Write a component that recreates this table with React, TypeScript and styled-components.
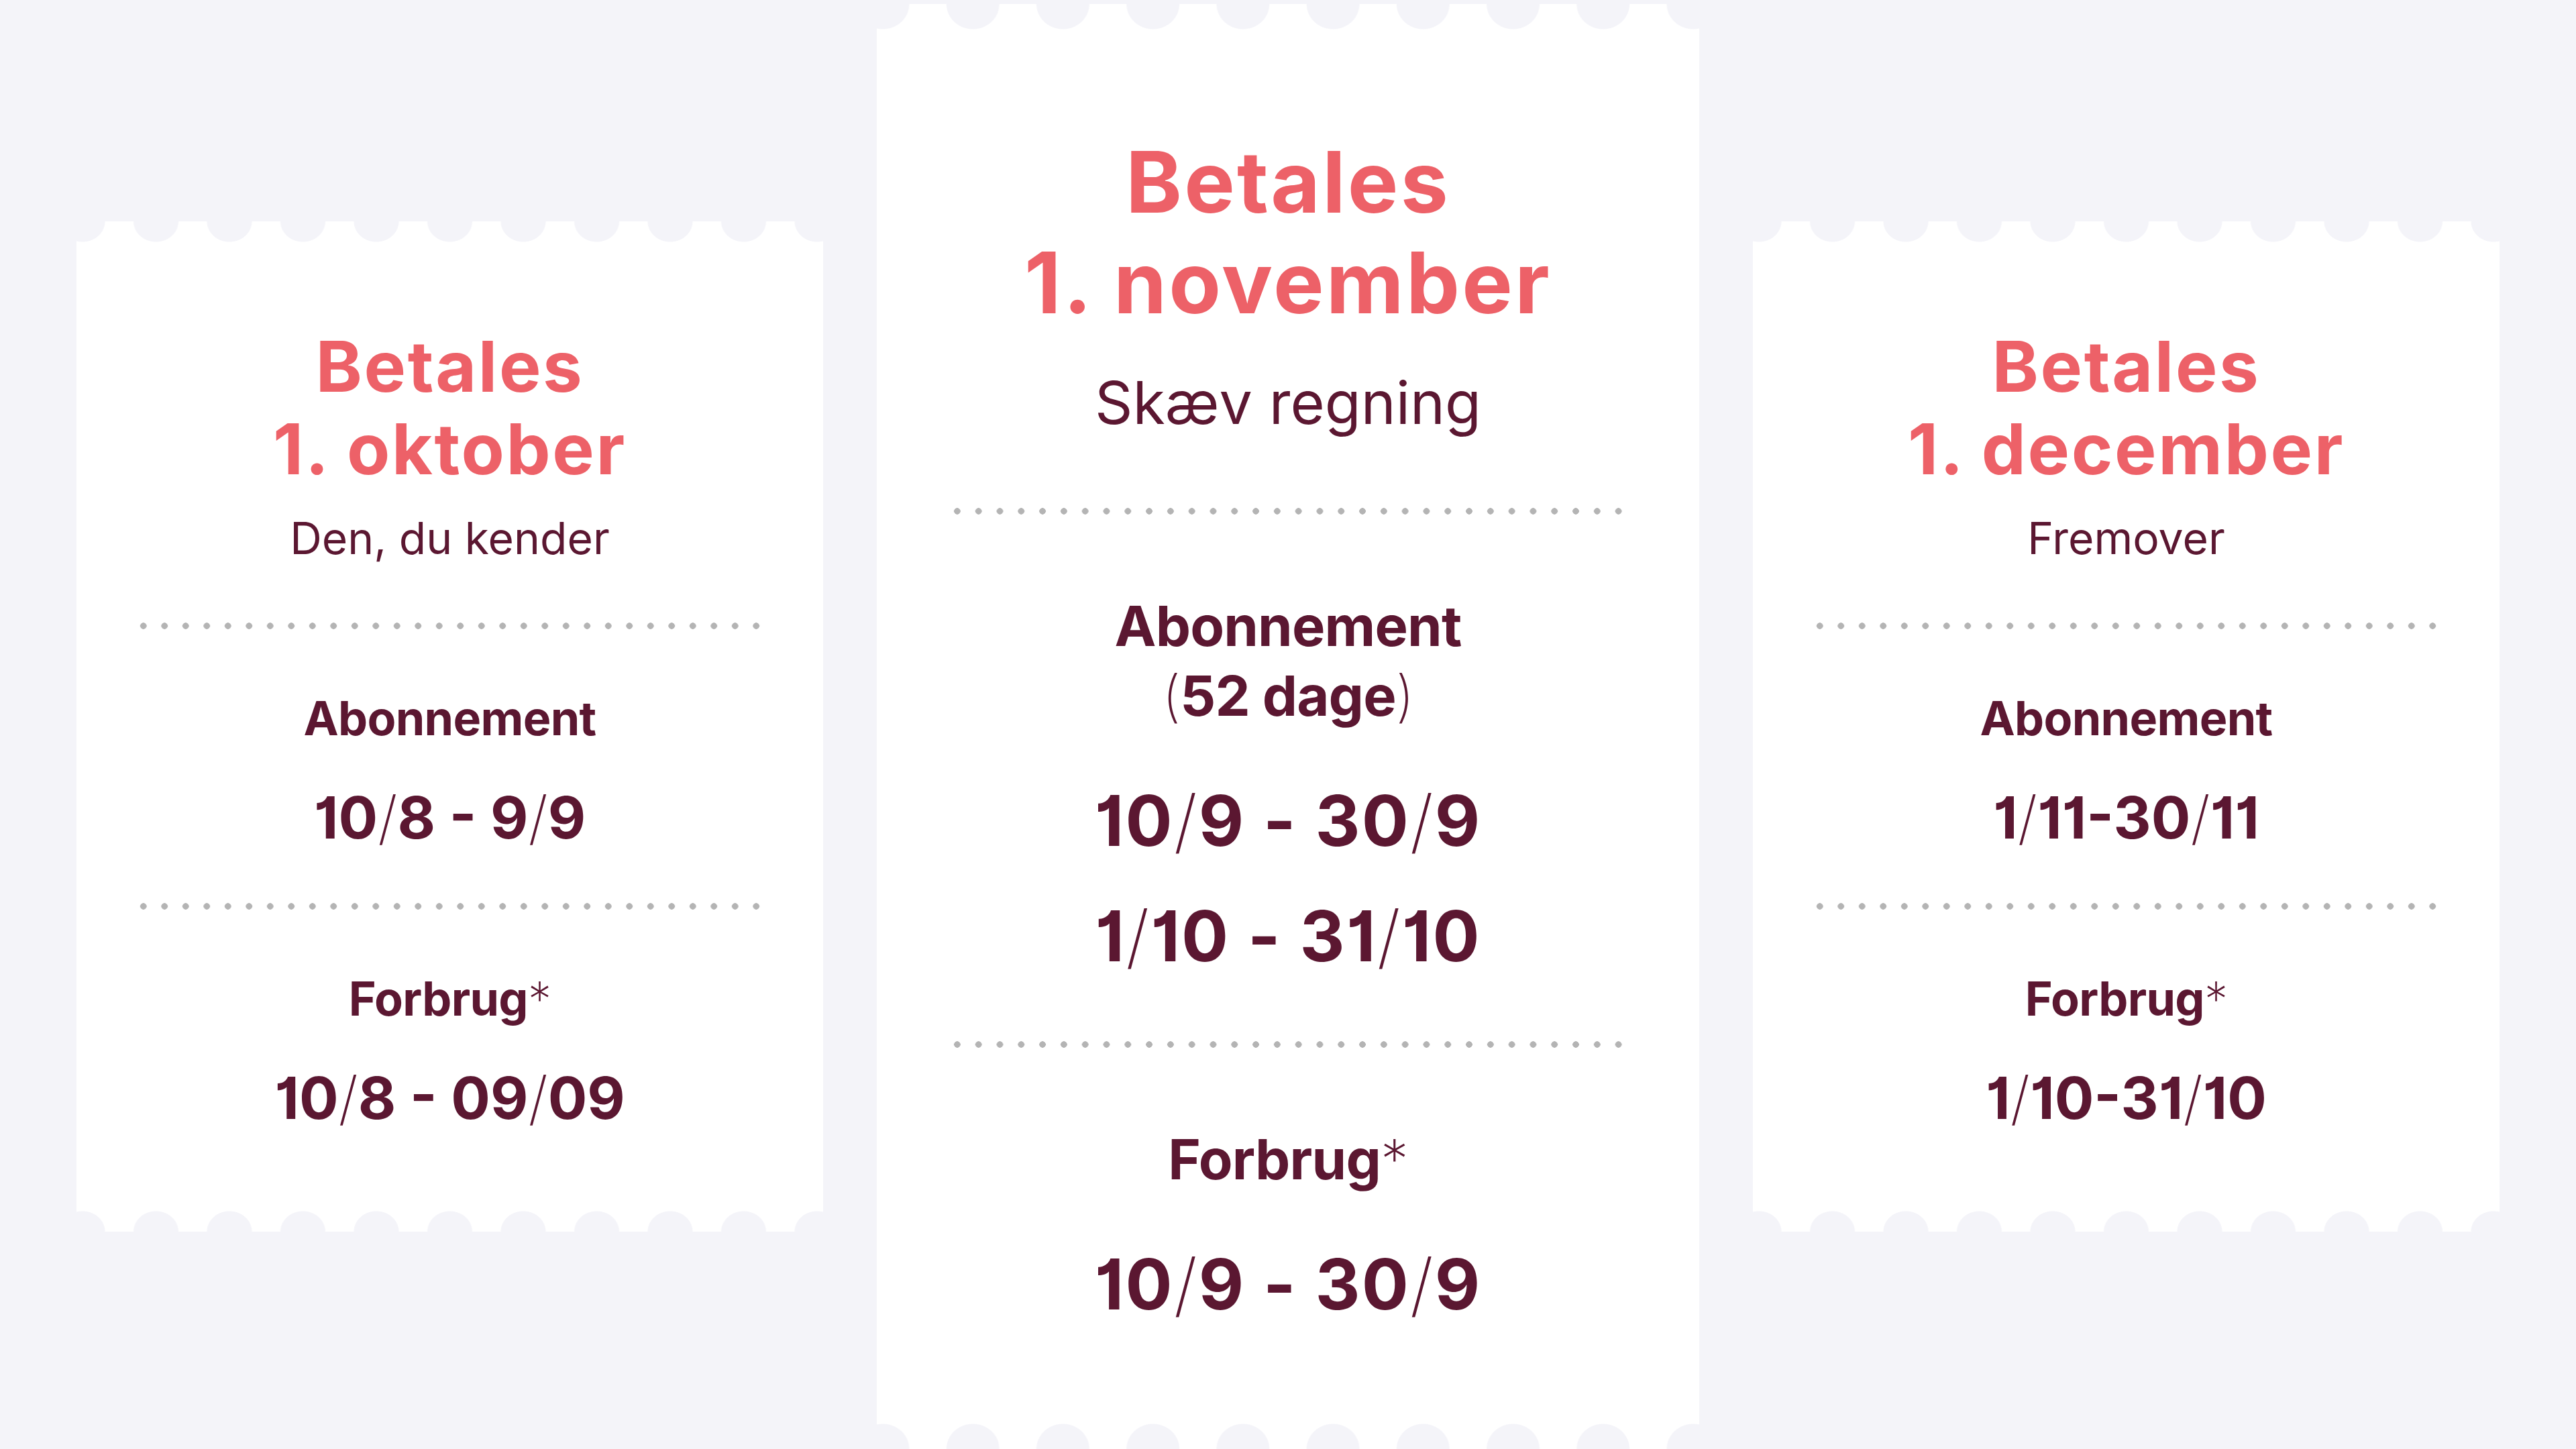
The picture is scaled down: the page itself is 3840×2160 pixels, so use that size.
import styled, { createGlobalStyle } from 'styled-components'

const BG = '#f4f4f9'
const CORAL = '#ed6168'
const WINE = '#5b1731'
const DOT = '#b4b4b4'

type Size = 'small' | 'big'

// measurements for the two ticket sizes
const sizes = {
  small: {
    width: 1113, height: 1506, top: 330, pad: 154, notchX: 34, notchY: 31,
    titleSize: 105, titleLH: 123, subSize: 66, subLH: 80, subMT: 32,
    divMT: 86, dots: 30, dotPitch: 31.5, labelSize: 70, labelLH: 80, labelMT: 93,
    dateSize: 87, dateLH: 100, dateMT: 58, div2MT: 77, dateTrack: 0,
  },
  big: {
    width: 1226, height: 2154, top: 6, pad: 190, notchX: 40, notchY: 38,
    titleSize: 127, titleLH: 150, subSize: 88, subLH: 100, subMT: 54,
    divMT: 107, dots: 32, dotPitch: 31.8, labelSize: 83, labelLH: 104, labelMT: 114,
    dateSize: 104, dateLH: 172, dateMT: 48, div2MT: 71, dateTrack: 0.02,
  },
}

const pitch = (s: Size) => (sizes[s].width - 18) / (s === 'big' ? 9 : 10)

const GlobalStyle = createGlobalStyle`
  html, body {
    margin: 0;
    padding: 0;
    background: ${BG};
  }
  body {
    font-family: Inter, 'Noto Sans', sans-serif;
    width: 3840px;
    height: 2160px;
    overflow: hidden;
  }
`

const Page = styled.main`
  display: flex;
  align-items: flex-start;
  gap: 80px;
  padding: 0 114px;
  height: 2160px;
  box-sizing: border-box;
`

const Ticket = styled.section<{ $size: Size }>`
  position: relative;
  flex: none;
  box-sizing: border-box;
  width: ${p => sizes[p.$size].width}px;
  height: ${p => sizes[p.$size].height}px;
  margin-top: ${p => sizes[p.$size].top}px;
  padding-top: ${p => sizes[p.$size].pad}px;
  background: #fff;
  display: flex;
  flex-direction: column;
  align-items: center;
  text-align: center;

  &::before,
  &::after {
    content: '';
    position: absolute;
    left: 0;
    right: 0;
    height: ${p => sizes[p.$size].notchY}px;
    background-repeat: repeat-x;
    background-size: ${p => pitch(p.$size)}px ${p => sizes[p.$size].notchY}px;
    background-position-x: ${p => 9 - pitch(p.$size) / 2}px;
  }

  &::before {
    top: 0;
    background-image: radial-gradient(${p => sizes[p.$size].notchX}px ${p => sizes[p.$size].notchY}px at 50% 0, ${BG} 97%, transparent 100%);
  }

  &::after {
    bottom: 0;
    background-image: radial-gradient(${p => sizes[p.$size].notchX}px ${p => sizes[p.$size].notchY}px at 50% 100%, ${BG} 97%, transparent 100%);
  }
`

const Title = styled.h2<{ $size: Size }>`
  margin: 0;
  color: ${CORAL};
  font-weight: 700;
  font-size: ${p => sizes[p.$size].titleSize}px;
  line-height: ${p => sizes[p.$size].titleLH}px;
  letter-spacing: 0.025em;
`

const Sub = styled.p<{ $size: Size }>`
  margin: ${p => sizes[p.$size].subMT}px 0 0;
  color: ${WINE};
  font-weight: 400;
  font-size: ${p => sizes[p.$size].subSize}px;
  line-height: ${p => sizes[p.$size].subLH}px;
`

const Dots = styled.div<{ $size: Size; $mt: number }>`
  flex: none;
  margin-top: ${p => p.$mt}px;
  width: ${p => sizes[p.$size].dots * sizes[p.$size].dotPitch}px;
  height: 10px;
  background-image: radial-gradient(circle 5px at 50% 50%, ${DOT} 90%, transparent 100%);
  background-size: ${p => sizes[p.$size].dotPitch}px 10px;
  background-repeat: repeat-x;
`

const Label = styled.h3<{ $size: Size }>`
  margin: ${p => sizes[p.$size].labelMT}px 0 0;
  color: ${WINE};
  font-weight: 700;
  font-size: ${p => sizes[p.$size].labelSize}px;
  line-height: ${p => sizes[p.$size].labelLH}px;
  letter-spacing: -0.01em;
`

const Dates = styled.div<{ $size: Size }>`
  margin-top: ${p => sizes[p.$size].dateMT}px;
  color: ${WINE};
  font-weight: 700;
  font-size: ${p => sizes[p.$size].dateSize}px;
  line-height: ${p => sizes[p.$size].dateLH}px;
  letter-spacing: ${p => sizes[p.$size].dateTrack}em;
  font-feature-settings: 'cv01';
  white-space: pre;
`

const Thin = styled.span`
  font-weight: 200;
`

const Typeset = ({ text }: { text: string }) => (
  <>
    {text.split(/([/()*])/).map((part, i) =>
      /^[/()*]$/.test(part) ? <Thin key={i}>{part}</Thin> : part
    )}
  </>
)

type TicketData = {
  size: Size
  title: string[]
  sub: string
  abo: string[]
  aboDates: string[]
  use: string[]
}

const tickets: TicketData[] = [
  {
    size: 'small',
    title: ['Betales', '1. oktober'],
    sub: 'Den, du kender',
    abo: ['Abonnement'],
    aboDates: ['10/8 - 9/9'],
    use: ['10/8 - 09/09'],
  },
  {
    size: 'big',
    title: ['Betales', '1. november'],
    sub: 'Skæv regning',
    abo: ['Abonnement', '(52 dage)'],
    aboDates: ['10/9 - 30/9', '1/10 - 31/10'],
    use: ['10/9 - 30/9'],
  },
  {
    size: 'small',
    title: ['Betales', '1. december'],
    sub: 'Fremover',
    abo: ['Abonnement'],
    aboDates: ['1/11-30/11'],
    use: ['1/10-31/10'],
  },
]

const Lines = ({ lines }: { lines: string[] }) => (
  <>
    {lines.map((l, i) => (
      <div key={i}><Typeset text={l} /></div>
    ))}
  </>
)

export default function App(): JSX.Element {
  return (
    <>
      <GlobalStyle />
      <Page>
        {tickets.map((t, index) => {
          const s = sizes[t.size]
          return (
            <Ticket key={index} $size={t.size}>
              <Title $size={t.size}><Lines lines={t.title} /></Title>
              <Sub $size={t.size}>{t.sub}</Sub>

              <Dots $size={t.size} $mt={s.divMT} />
              <Label $size={t.size}><Lines lines={t.abo} /></Label>
              <Dates $size={t.size}><Lines lines={t.aboDates} /></Dates>

              <Dots $size={t.size} $mt={s.div2MT} />
              <Label $size={t.size}><Typeset text="Forbrug*" /></Label>
              <Dates $size={t.size}><Lines lines={t.use} /></Dates>
            </Ticket>
          )
        })}
      </Page>
    </>
  )
}
